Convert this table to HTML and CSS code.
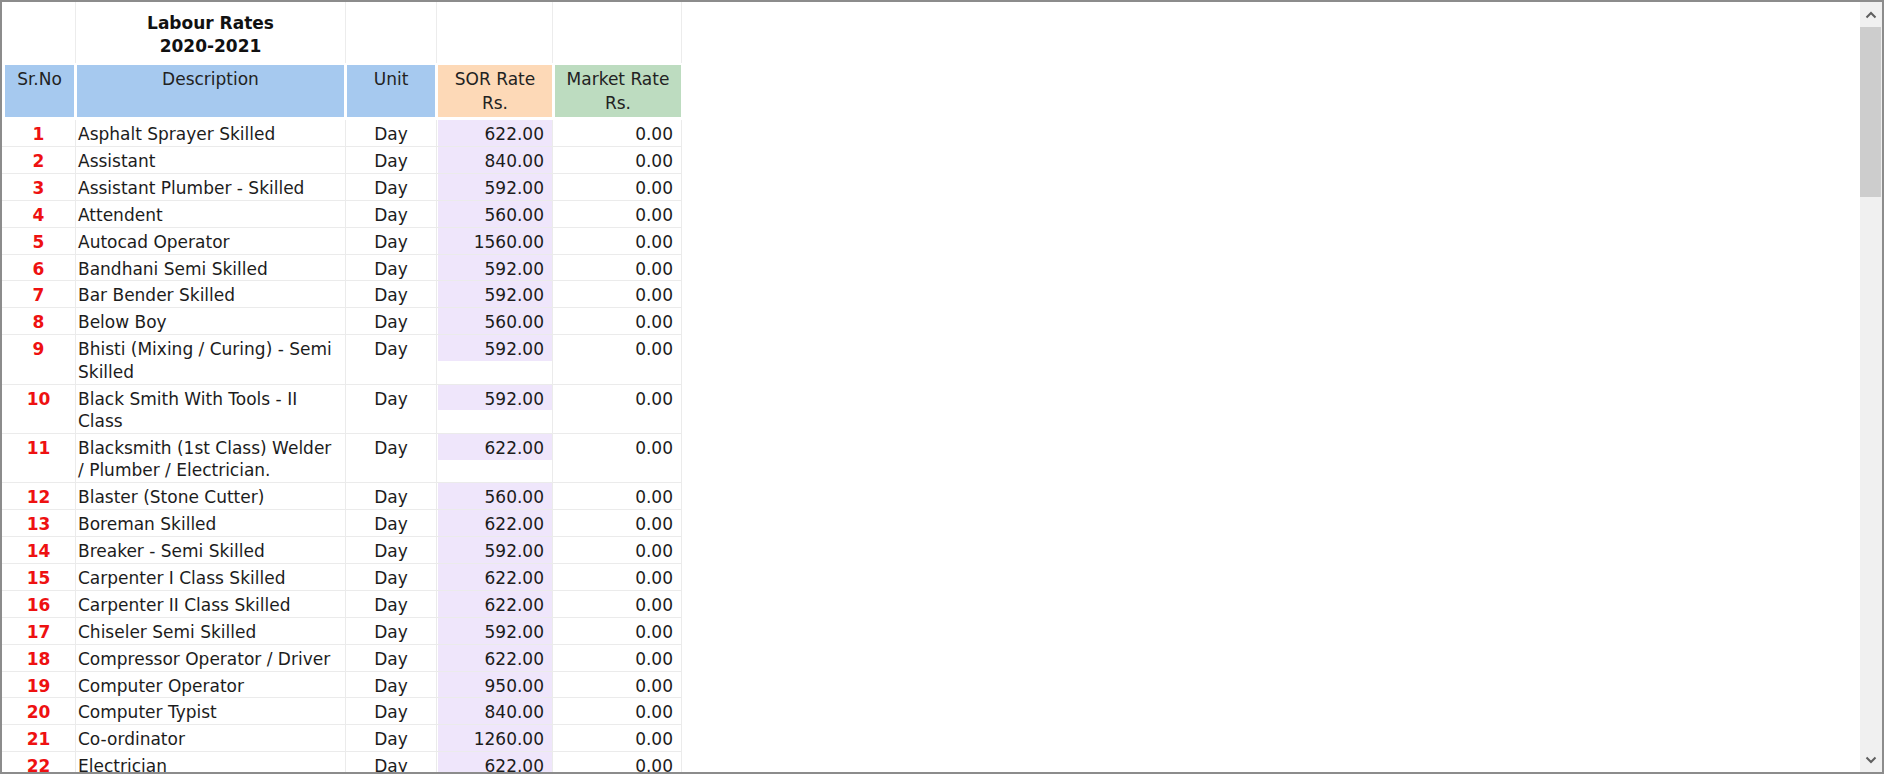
FILE: index.html
```html
<!DOCTYPE html>
<html>
<head>
<meta charset="utf-8">
<title>Labour Rates 2020-2021</title>
<link rel="stylesheet" href="styles.css">
</head>
<body>
<div class="frame">
  <div class="viewport">
    <table class="rates">
      <colgroup>
        <col class="c-sr"><col class="c-desc"><col class="c-unit"><col class="c-sor"><col class="c-mkt">
      </colgroup>
      <thead>
        <tr class="title-row">
          <td></td>
          <td class="title">Labour Rates<br>2020-2021</td>
          <td></td>
          <td></td>
          <td></td>
        </tr>
        <tr class="head-row">
          <th class="h-sr">Sr.No</th>
          <th class="h-desc">Description</th>
          <th class="h-unit">Unit</th>
          <th class="h-sor">SOR Rate<br>Rs.</th>
          <th class="h-mkt">Market Rate<br>Rs.</th>
        </tr>
      </thead>
      <tbody>
        <tr><td class="sr">1</td><td class="desc">Asphalt Sprayer Skilled</td><td class="unit">Day</td><td class="sor"><div class="sor-val">622.00</div></td><td class="mkt">0.00</td></tr>
        <tr><td class="sr">2</td><td class="desc">Assistant</td><td class="unit">Day</td><td class="sor"><div class="sor-val">840.00</div></td><td class="mkt">0.00</td></tr>
        <tr><td class="sr">3</td><td class="desc">Assistant Plumber - Skilled</td><td class="unit">Day</td><td class="sor"><div class="sor-val">592.00</div></td><td class="mkt">0.00</td></tr>
        <tr><td class="sr">4</td><td class="desc">Attendent</td><td class="unit">Day</td><td class="sor"><div class="sor-val">560.00</div></td><td class="mkt">0.00</td></tr>
        <tr><td class="sr">5</td><td class="desc">Autocad Operator</td><td class="unit">Day</td><td class="sor"><div class="sor-val">1560.00</div></td><td class="mkt">0.00</td></tr>
        <tr><td class="sr">6</td><td class="desc">Bandhani Semi Skilled</td><td class="unit">Day</td><td class="sor"><div class="sor-val">592.00</div></td><td class="mkt">0.00</td></tr>
        <tr><td class="sr">7</td><td class="desc">Bar Bender Skilled</td><td class="unit">Day</td><td class="sor"><div class="sor-val">592.00</div></td><td class="mkt">0.00</td></tr>
        <tr><td class="sr">8</td><td class="desc">Below Boy</td><td class="unit">Day</td><td class="sor"><div class="sor-val">560.00</div></td><td class="mkt">0.00</td></tr>
        <tr><td class="sr">9</td><td class="desc">Bhisti (Mixing / Curing) - Semi Skilled</td><td class="unit">Day</td><td class="sor"><div class="sor-val">592.00</div></td><td class="mkt">0.00</td></tr>
        <tr><td class="sr">10</td><td class="desc">Black Smith With Tools - II Class</td><td class="unit">Day</td><td class="sor"><div class="sor-val">592.00</div></td><td class="mkt">0.00</td></tr>
        <tr><td class="sr">11</td><td class="desc">Blacksmith (1st Class) Welder / Plumber / Electrician.</td><td class="unit">Day</td><td class="sor"><div class="sor-val">622.00</div></td><td class="mkt">0.00</td></tr>
        <tr><td class="sr">12</td><td class="desc">Blaster (Stone Cutter)</td><td class="unit">Day</td><td class="sor"><div class="sor-val">560.00</div></td><td class="mkt">0.00</td></tr>
        <tr><td class="sr">13</td><td class="desc">Boreman Skilled</td><td class="unit">Day</td><td class="sor"><div class="sor-val">622.00</div></td><td class="mkt">0.00</td></tr>
        <tr><td class="sr">14</td><td class="desc">Breaker - Semi Skilled</td><td class="unit">Day</td><td class="sor"><div class="sor-val">592.00</div></td><td class="mkt">0.00</td></tr>
        <tr><td class="sr">15</td><td class="desc">Carpenter I Class Skilled</td><td class="unit">Day</td><td class="sor"><div class="sor-val">622.00</div></td><td class="mkt">0.00</td></tr>
        <tr><td class="sr">16</td><td class="desc">Carpenter II Class Skilled</td><td class="unit">Day</td><td class="sor"><div class="sor-val">622.00</div></td><td class="mkt">0.00</td></tr>
        <tr><td class="sr">17</td><td class="desc">Chiseler Semi Skilled</td><td class="unit">Day</td><td class="sor"><div class="sor-val">592.00</div></td><td class="mkt">0.00</td></tr>
        <tr><td class="sr">18</td><td class="desc">Compressor Operator / Driver</td><td class="unit">Day</td><td class="sor"><div class="sor-val">622.00</div></td><td class="mkt">0.00</td></tr>
        <tr><td class="sr">19</td><td class="desc">Computer Operator</td><td class="unit">Day</td><td class="sor"><div class="sor-val">950.00</div></td><td class="mkt">0.00</td></tr>
        <tr><td class="sr">20</td><td class="desc">Computer Typist</td><td class="unit">Day</td><td class="sor"><div class="sor-val">840.00</div></td><td class="mkt">0.00</td></tr>
        <tr><td class="sr">21</td><td class="desc">Co-ordinator</td><td class="unit">Day</td><td class="sor"><div class="sor-val">1260.00</div></td><td class="mkt">0.00</td></tr>
        <tr><td class="sr">22</td><td class="desc">Electrician</td><td class="unit">Day</td><td class="sor"><div class="sor-val">622.00</div></td><td class="mkt">0.00</td></tr>
      </tbody>
    </table>
  </div>
  <div class="scrollbar">
    <div class="sb-btn">
      <svg width="12" height="8" viewBox="0 0 12 8"><path d="M1.5 6.5 L6 2 L10.5 6.5" fill="none" stroke="#5f5f5f" stroke-width="2"/></svg>
    </div>
    <div class="sb-track">
      <div class="sb-thumb"></div>
    </div>
    <div class="sb-btn">
      <svg width="12" height="8" viewBox="0 0 12 8"><path d="M1.5 1.5 L6 6 L10.5 1.5" fill="none" stroke="#5f5f5f" stroke-width="2"/></svg>
    </div>
  </div>
</div>
</body>
</html>
```

FILE: styles.css
```css
html, body {
  margin: 0;
  padding: 0;
  background: #ffffff;
}

.frame {
  box-sizing: border-box;
  width: 1884px;
  height: 774px;
  border: 2px solid #8c8c8c;
  display: flex;
  overflow: hidden;
}

.viewport {
  flex: 1;
  overflow: hidden;
  background: #ffffff;
}

.rates {
  table-layout: fixed;
  width: 680px;
  border-collapse: separate;
  border-spacing: 0;
  font-family: "DejaVu Sans", Verdana, sans-serif;
  font-size: 17px;
  color: #1c1c1c;
}

.c-sr { width: 74px; }
.c-desc { width: 270px; }
.c-unit { width: 91px; }
.c-sor { width: 116px; }
.c-mkt { width: 129px; }

/* title row */
.title-row td {
  height: 46px;
  padding: 10px 0 5px;
  border-right: 1px solid #ececec;
  vertical-align: bottom;
}

.title-row .title {
  font-weight: bold;
  text-align: center;
  line-height: 23px;
  color: #111111;
}

/* column header row */
.head-row th {
  font-weight: normal;
  text-align: center;
  vertical-align: top;
  line-height: 24.5px;
  padding: 1.5px 0 1.5px;
  height: 49px;
  border-top: 2px solid #ffffff;
  border-bottom: 3px solid #ffffff;
  border-left: 1px solid #ffffff;
  border-right: 2px solid #ffffff;
  color: #222222;
}

.head-row .h-sr { border-left-width: 3px; background: #a6c9ef; }
.head-row .h-desc { background: #a6c9ef; }
.head-row .h-unit { background: #a6c9ef; }
.head-row .h-sor { background: #fdd9b7; border-right-width: 1px; }
.head-row .h-mkt { background: #bddcc0; border-left-width: 2px; border-right-width: 1px; }

/* data rows */
tbody td {
  vertical-align: top;
  line-height: 22.4px;
  padding: 3px 2px 0.5px;
  border-right: 1px solid #ebebeb;
  border-bottom: 1px solid #ebebeb;
}

tbody .sr {
  text-align: center;
  font-weight: bold;
  color: #ee1111;
}

tbody .desc {
  text-align: left;
  padding-right: 8px;
}

tbody .unit {
  text-align: center;
}

tbody .sor {
  padding: 0 0 0 1px;
}

.sor-val {
  background: #efe6fb;
  text-align: right;
  padding: 3px 8px 0.5px 0;
}

tbody .mkt {
  text-align: right;
  padding-right: 8px;
}

/* scrollbar */
.scrollbar {
  width: 22px;
  background: #f0f0f0;
  display: flex;
  flex-direction: column;
}

.sb-btn {
  height: 25px;
  display: flex;
  align-items: center;
  justify-content: center;
}

.sb-track {
  flex: 1;
}

.sb-thumb {
  height: 170px;
  margin: 0 1px 0 0;
  background: #cdcdcd;
}
```
